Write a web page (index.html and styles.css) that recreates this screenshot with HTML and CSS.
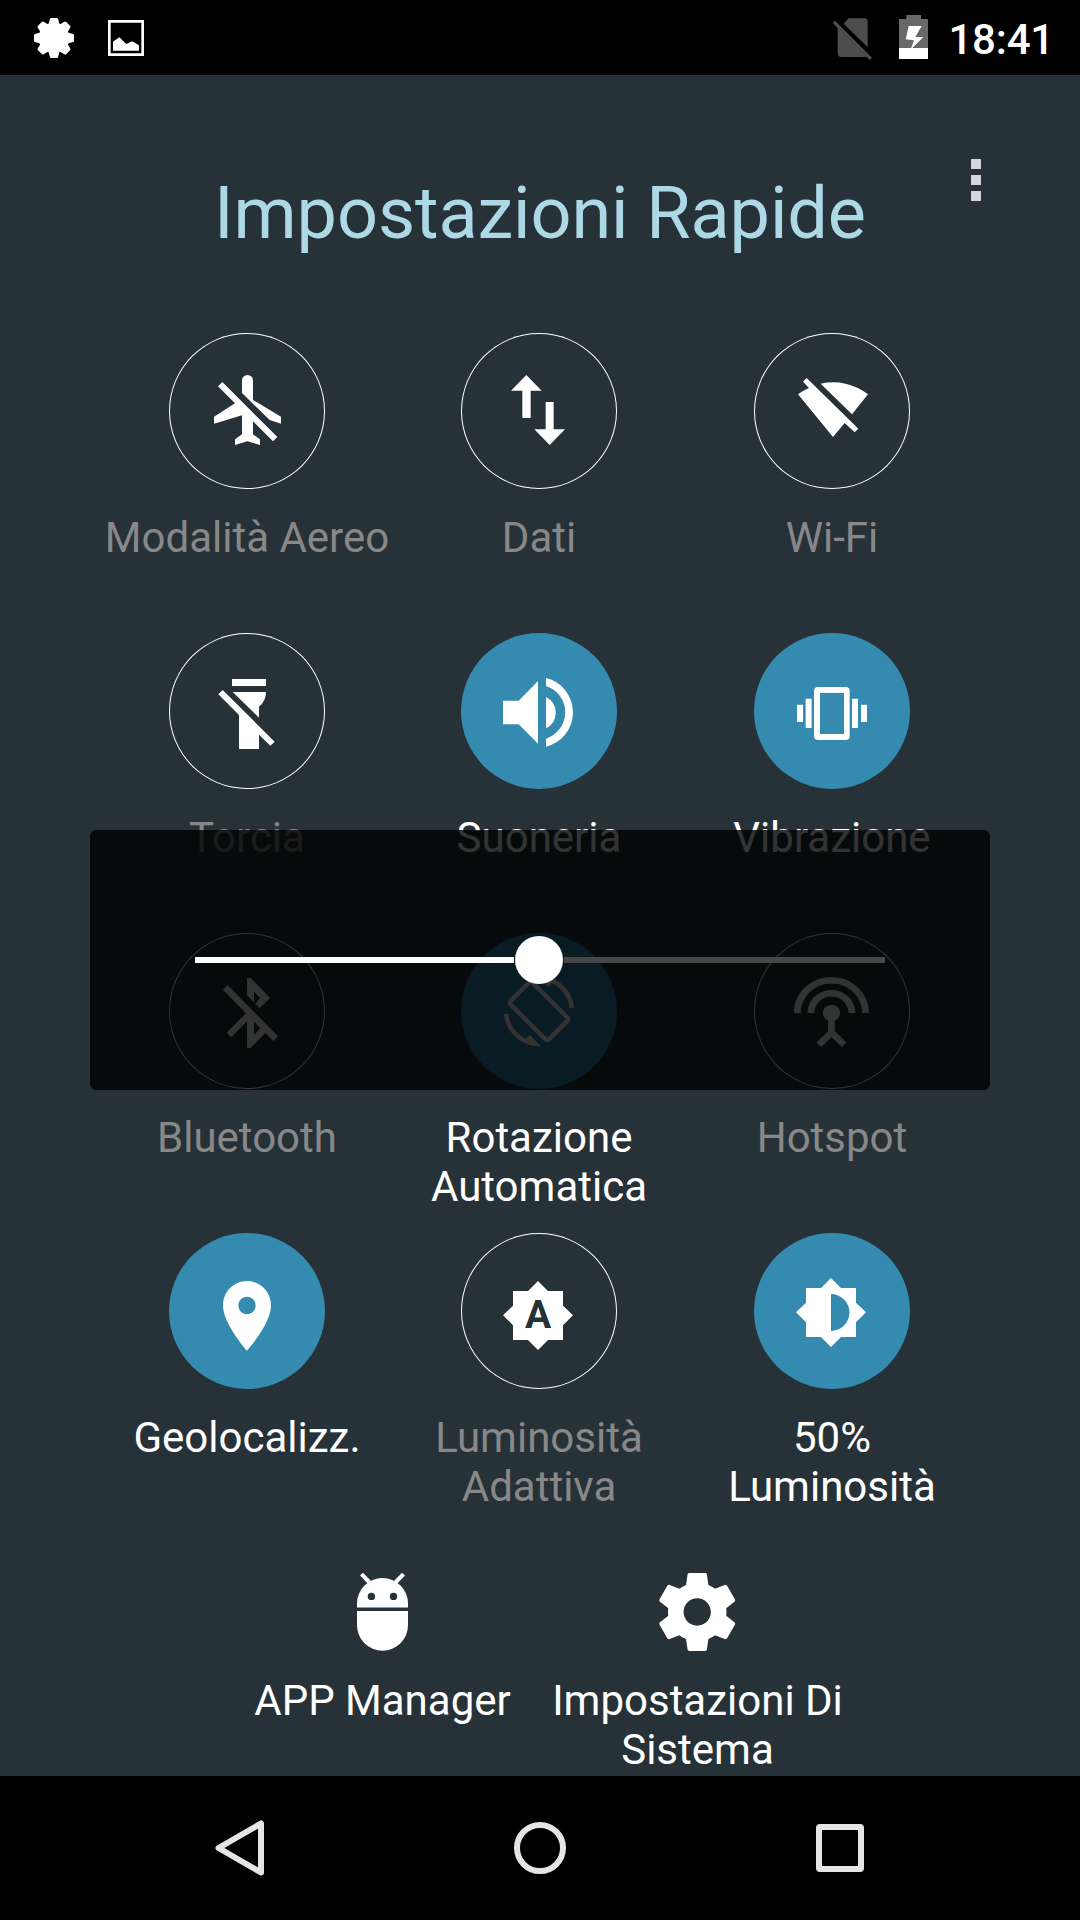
FILE: index.html
```html
<!DOCTYPE html>
<html lang="it">
<head>
<meta charset="utf-8">
<title>Impostazioni Rapide</title>
<link rel="stylesheet" href="styles.css">
</head>
<body>
<div class="screen">
  <div class="statusbar">
    <svg class="status-gear" viewBox="-60 -60 120 120">
      <defs><path id="tooth" d="M-9 -60H9Q12 -60 13 -55L17 -38H-17L-13 -55Q-12 -60 -9 -60Z"/></defs>
      <circle r="46"/>
      <use href="#tooth"/><use href="#tooth" transform="rotate(45)"/><use href="#tooth" transform="rotate(90)"/><use href="#tooth" transform="rotate(135)"/>
      <use href="#tooth" transform="rotate(180)"/><use href="#tooth" transform="rotate(225)"/><use href="#tooth" transform="rotate(270)"/><use href="#tooth" transform="rotate(315)"/>
    </svg>
    <svg class="status-picture" viewBox="324 60 108 108"><path fill-rule="evenodd" d="M324 60H432V168H324ZM332 68V160H424V68Z"/><path d="M339 125L358 112L379 132L396 124L417 136V152H339Z"/></svg>
    <div class="status-right">
      <svg class="status-sim" viewBox="156 54 120 126"><path d="M191 71L206 55H254Q263 55 263 64V142ZM158 69L165 62L276 173L269 180L259 170Q257 171 253 171H184Q173 171 173 160V84Z"/></svg>
      <svg class="status-battery" viewBox="357 45 87 132"><path class="battery-shell" d="M379 45H423V57H444V177H357V57H379Z"/><path d="M357 144H444V177H357ZM386 78H425L406 111H430L391 150L402 121L377 118Z"/></svg>
      <span class="clock">18:41</span>
    </div>
  </div>

  <main class="content">
    <header class="header">
      <h1 class="title">Impostazioni Rapide</h1>
      <div class="menu"><i></i><i></i><i></i></div>
    </header>

    <section class="toggles">
      <div class="toggle">
        <svg class="disc" viewBox="237 39 468 468"><path d="M456 219V181.500A16.500 16.500 0 0 1 489 181.500V240L573 290V311L539 300ZM384 199L397 186L562 351L549 364L489 304V343L510 358V375L472 364L435 375V358L456 343V286L372 311V290L435 250Z"/></svg>
        <div class="label">Modalità Aereo</div>
      </div>
      <div class="toggle">
        <svg class="disc" viewBox="63 39 468 468"><path d="M259 165L305 212H272V294H247V212H213ZM317 246H341V328H375L329 375L283 328H317Z"/></svg>
        <div class="label">Dati</div>
      </div>
      <div class="toggle">
        <svg class="disc" viewBox="942 39 468 468"><path d="M1142 191A171 171 0 0 1 1284 223L1236 283ZM1089 185L1100 174L1255 326L1244 337L1214 309L1179 351L1074 223Q1090 211 1107 204Z"/></svg>
        <div class="label">Wi-Fi</div>
      </div>

      <div class="toggle">
        <svg class="disc" viewBox="237 39 468 468"><path d="M426 177H528V198H426ZM428 216H528Q528 243 507 260V293ZM385 223L398 210L554 365L541 377L507 344V387H447V285Z"/></svg>
        <div class="label">Torcia</div>
      </div>
      <div class="toggle on">
        <svg class="disc" viewBox="63 39 468 468"><path d="M189 242H236L294 183V371L236 313H189ZM318 231A52.600 52.600 0 0 1 318 325ZM318 174A106 106 0 0 1 318 380V356A83 83 0 0 0 318 198Z"/></svg>
        <div class="label">Suoneria</div>
      </div>
      <div class="toggle on">
        <svg class="disc" viewBox="942 39 468 468"><path fill-rule="evenodd" d="M1134 201H1217Q1229 201 1229 213V348Q1229 360 1217 360H1134Q1122 360 1122 348V213Q1122 201 1134 201ZM1140 219V342H1212V219ZM1097 236H1115V324H1097ZM1236 236H1254V324H1236ZM1071 254H1089V306H1071ZM1263 254H1281V306H1263Z"/></svg>
        <div class="label">Vibrazione</div>
      </div>

      <div class="toggle">
        <svg class="disc" viewBox="267 99 468 468"><path fill-rule="evenodd" d="M501 234H512L570 294L539 325L525 311L541 294L522 275V307L501 286ZM429 269L443 255L594 409L580 423L556 399L512 444H501V364L453 412L440 398L498 340ZM522 364V405L541 385Z"/></svg>
        <div class="label">Bluetooth</div>
      </div>
      <div class="toggle on">
        <svg class="disc" viewBox="-117 99 468 468"><path transform="translate(11.5 227.5) scale(8.79)" d="M16.480 2.520c3.270 1.550 5.610 4.720 5.970 8.480h1.500C23.440 4.840 18.290 0 12 0l-.66.03 3.810 3.810 1.330-1.320zm-6.250-.77c-.59-.59-1.540-.59-2.120 0L1.750 8.110c-.59.59-.59 1.540 0 2.120l12.020 12.020c.59.59 1.540.59 2.120 0l6.360-6.360c.59-.59.59-1.540 0-2.120L10.230 1.750zm4.600 19.440L2.810 9.170l6.360-6.360 12.020 12.020-6.360 6.360zm-7.310.29C4.250 19.940 1.910 16.760 1.550 13H.05C.56 19.160 5.710 24 12 24l.66-.03-3.810-3.810-1.330 1.320z"/></svg>
        <div class="label">Rotazione<br>Automatica</div>
      </div>
      <div class="toggle">
        <svg class="disc" viewBox="762 99 468 468"><path transform="translate(871.7 221.2) scale(10.23 9.81)" d="M12 5c-3.870 0-7 3.130-7 7h2c0-2.760 2.240-5 5-5s5 2.240 5 5h2c0-3.870-3.130-7-7-7zm1 9.290c.88-.39 1.500-1.260 1.500-2.290 0-1.380-1.120-2.500-2.500-2.500S9.500 10.620 9.500 12c0 1.020.62 1.900 1.500 2.290v3.300L7.590 21 9 22.410l3-3 3 3L16.410 21 13 17.590v-3.300zM12 1C5.930 1 1 5.930 1 12h2c0-4.970 4.030-9 9-9s9 4.030 9 9h2c0-6.070-4.930-11-11-11z"/></svg>
        <div class="label">Hotspot</div>
      </div>

      <div class="toggle on">
        <svg class="disc" viewBox="147 39 468 468"><path transform="translate(257.4 162.1) scale(10.3 10.45)" d="M12 2C8.130 2 5 5.130 5 9c0 5.250 7 13 7 13s7-7.750 7-13c0-3.870-3.130-7-7-7zm0 9.500c-1.380 0-2.500-1.120-2.500-2.500s1.120-2.500 2.500-2.500 2.500 1.120 2.500 2.500-1.120 2.500-2.500 2.500z"/></svg>
        <div class="label">Geolocalizz.</div>
      </div>
      <div class="toggle">
        <svg class="disc" viewBox="-117 39 468 468">
          <path d="M114 183L144 213H189V257L219 286L189 316V360H144L114 390L84 360H39V316L9 286L39 257V213H84Z"/>
          <text class="auto-letter" x="114" y="324">A</text>
        </svg>
        <div class="label">Luminosità<br>Adattiva</div>
      </div>
      <div class="toggle on">
        <svg class="disc" viewBox="762 39 468 468"><path fill-rule="evenodd" d="M993 174L1023 204H1068V248L1098 277L1068 307V351H1023L993 381L963 351H918V307L888 277L918 248V204H963ZM993 222V333A55.500 55.500 0 0 0 993 222Z"/></svg>
        <div class="label">50%<br>Luminosità</div>
      </div>
    </section>

    <section class="shortcuts">
      <div class="shortcut">
        <svg class="shortcut-icon" viewBox="344 1573 78 78">
          <path d="M357 1607.500V1603.500A25.500 25.500 0 0 1 408 1603.500V1607.500ZM357 1611H408V1625.300A25.500 25.500 0 0 1 357 1625.300Z"/>
          <path class="antenna" d="M361.500 1574L371 1584M403.500 1574L394 1584"/>
          <circle class="eye" cx="371.400" cy="1596.400" r="3.700"/><circle class="eye" cx="393.500" cy="1596.400" r="3.700"/>
        </svg>
        <div class="label">APP Manager</div>
      </div>
      <div class="shortcut">
        <svg class="shortcut-icon" viewBox="2.2 2 20 20"><path d="M19.430 12.980c.04-.32.07-.64.07-.98s-.03-.66-.07-.98l2.110-1.650c.19-.15.24-.42.12-.64l-2-3.460c-.12-.22-.39-.3-.61-.22l-2.490 1c-.52-.4-1.080-.73-1.690-.98l-.38-2.650C14.460 2.180 14.250 2 14 2h-4c-.25 0-.46.18-.49.42l-.38 2.650c-.61.25-1.170.59-1.690.98l-2.490-1c-.23-.09-.49 0-.61.22l-2 3.460c-.13.22-.07.49.12.64l2.110 1.650c-.04.32-.07.65-.07.98s.03.66.07.98l-2.110 1.650c-.19.15-.24.42-.12.64l2 3.460c.12.22.39.3.61.22l2.490-1c.52.4 1.080.73 1.690.98l.38 2.650c.03.24.24.42.49.42h4c.25 0 .46-.18.49-.42l.38-2.650c.61-.25 1.170-.59 1.690-.98l2.490 1c.23.09.49 0 .61-.22l2-3.460c.12-.22.07-.49-.12-.64l-2.110-1.650zM12 15.500c-1.930 0-3.500-1.570-3.500-3.500s1.570-3.500 3.500-3.500 3.500 1.570 3.500 3.500-1.570 3.500-3.500 3.500z"/></svg>
        <div class="label">Impostazioni Di<br>Sistema</div>
      </div>
    </section>
  </main>

  <nav class="navbar">
    <svg viewBox="210 1818 60 60"><path d="M261 1823.500V1872.500L218.500 1848Z"/></svg>
    <svg viewBox="510 1818 60 60"><circle cx="540" cy="1848" r="23"/></svg>
    <svg viewBox="810 1818 60 60"><rect x="819" y="1827" width="42" height="42" rx="1"/></svg>
  </nav>

  <div class="slider-dialog">
    <div class="track track-on"></div>
    <div class="thumb"></div>
    <div class="track track-off"></div>
  </div>
</div>
</body>
</html>
```
FILE: styles.css
```css
* {
  box-sizing: border-box;
}

body {
  margin: 0;
  background: #000;
  font-family: Roboto, "Noto Sans", sans-serif;
  color: #fff;
}

svg {
  display: block;
  fill: #fff;
}

.screen {
  position: relative;
  display: flex;
  flex-direction: column;
  width: 1080px;
  height: 1920px;
  overflow: hidden;
}

/* Status bar */
.statusbar {
  display: flex;
  align-items: center;
  height: 75px;
  padding: 0 26px 0 34px;
}

.status-gear {
  width: 40px;
  height: 40px;
}

.status-picture {
  width: 36px;
  height: 36px;
  margin-left: 34px;
}

.status-right {
  display: flex;
  align-items: center;
  height: 75px;
  margin-left: auto;
}

.status-sim {
  width: 40px;
  height: 42px;
  margin: 3px 27px 0 0;
  fill: #4d4d4d;
}

.status-battery {
  width: 29px;
  height: 44px;
  margin: 0 20px 1px 0;
}

.battery-shell {
  fill: #686868;
}

.clock {
  font-size: 42px;
  font-weight: 500;
  line-height: 49px;
  letter-spacing: -0.2px;
  margin-top: 3px;
}

/* Main panel */
.content {
  height: 1701px;
  background: #273238;
}

.header {
  display: grid;
  height: 258px;
}

.title {
  grid-area: 1 / 1;
  justify-self: center;
  margin: 97px 0 0;
  font-size: 72px;
  font-weight: 400;
  line-height: 84px;
  letter-spacing: -0.1px;
  color: #add8e6;
}

.menu {
  grid-area: 1 / 1;
  justify-self: end;
  display: flex;
  flex-direction: column;
  gap: 6px;
  padding: 84px 99px 0 0;
}

.menu i {
  width: 10px;
  height: 10px;
  background: #d4d6d7;
}

.toggles {
  display: grid;
  grid-template-columns: 292px 292px 294px;
  grid-auto-rows: 300px;
  padding-left: 101px;
}

.toggle,
.shortcut {
  display: flex;
  flex-direction: column;
  align-items: center;
}

.disc {
  width: 156px;
  height: 156px;
  border-radius: 50%;
  box-shadow: inset 0 0 0 1px #fff;
}

.on .disc {
  background: #358ab0;
  box-shadow: none;
}

.label {
  margin-top: 24px;
  font-size: 42px;
  line-height: 49px;
  text-align: center;
  white-space: nowrap;
}

.toggle .label {
  color: #888;
}

.toggle.on .label {
  color: #fff;
}

.auto-letter {
  font-size: 117px;
  font-weight: 700;
  text-anchor: middle;
  fill: #273238;
}

.shortcuts {
  display: flex;
  justify-content: center;
  padding-top: 40px;
}

.shortcut {
  width: 315px;
}

.shortcut .label {
  margin-top: 25px;
}

.shortcut-icon {
  width: 78px;
  height: 78px;
}

.antenna {
  fill: none;
  stroke: #fff;
  stroke-width: 4;
}

.eye {
  fill: #273238;
}

/* Navigation bar */
.navbar {
  display: flex;
  justify-content: center;
  align-items: center;
  gap: 240px;
  height: 144px;
}

.navbar svg {
  width: 60px;
  height: 60px;
  fill: none;
  stroke: #e5e5e5;
  stroke-width: 6;
  stroke-linejoin: round;
}

/* Brightness slider, floating above the toggles */
.slider-dialog {
  position: absolute;
  left: 90px;
  top: 830px;
  display: flex;
  align-items: center;
  gap: 1px;
  width: 900px;
  height: 260px;
  padding: 0 105px;
  border-radius: 6px;
  background: rgba(0, 0, 0, 0.8);
}

.track {
  height: 6px;
}

.track-on {
  width: 319px;
  background: #fff;
}

.track-off {
  flex: 1;
  background: #474747;
}

.thumb {
  width: 48px;
  height: 48px;
  border-radius: 50%;
  background: #fff;
}
```
